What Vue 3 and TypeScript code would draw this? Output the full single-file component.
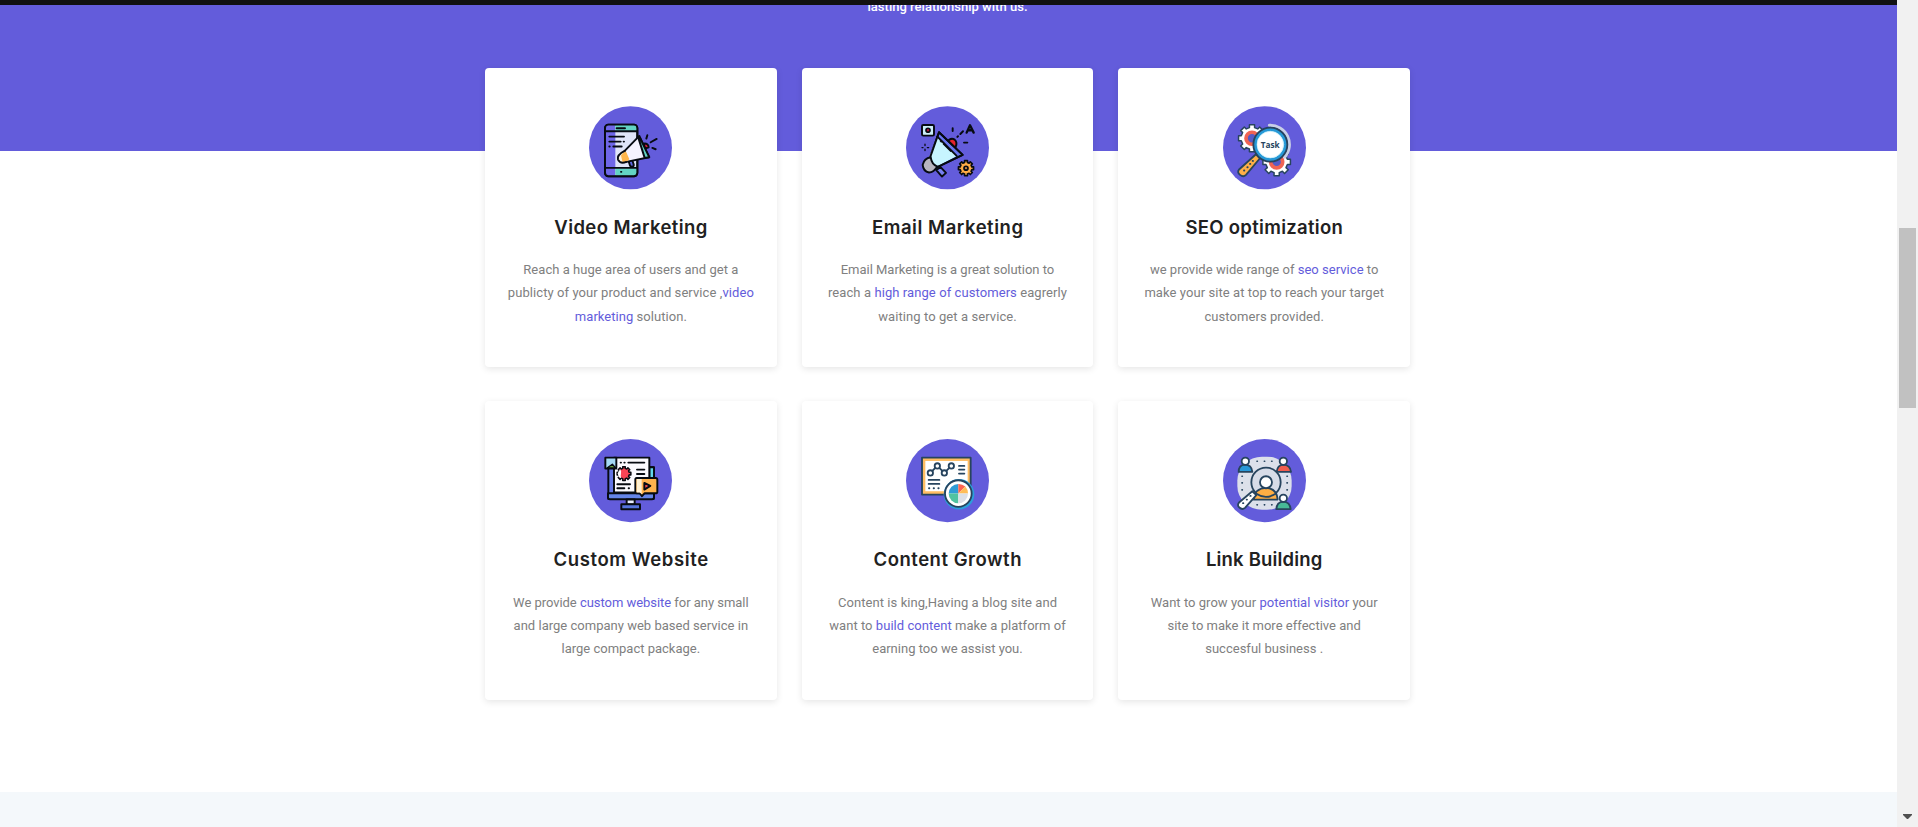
<script setup lang="ts">
import type { Directive } from 'vue'

interface Segment { text: string; link?: boolean }
interface Line { width: number; parts: Segment[] }
interface Service {
  icon: 'video' | 'email' | 'seo' | 'website' | 'content' | 'link'
  view: string
  title: string
  titleWidth: number
  lines: Line[]
}

const t = (text: string): Segment => ({ text })
const a = (text: string): Segment => ({ text, link: true })
const line = (width: number, ...parts: Segment[]): Line => ({ width, parts })

const services: Service[] = [
  {
    icon: 'video', view: '26 30 249 251', title: 'Video Marketing', titleWidth: 153,
    lines: [
      line(215, t('Reach a huge area of users and get a')),
      line(246, t('publicty of your product and service ,'), a('video')),
      line(112, a('marketing'), t(' solution.')),
    ],
  },
  {
    icon: 'email', view: '26 30 249 251', title: 'Email Marketing', titleWidth: 151,
    lines: [
      line(213.5, t('Email Marketing is a great solution to')),
      line(239, t('reach a '), a('high range of customers'), t(' eagrerly')),
      line(138.5, t('waiting to get a service.')),
    ],
  },
  {
    icon: 'seo', view: '26 30 249 251', title: 'SEO optimization', titleWidth: 157.5,
    lines: [
      line(228.5, t('we provide wide range of '), a('seo service'), t(' to')),
      line(239.5, t('make your site at top to reach your target')),
      line(119.5, t('customers provided.')),
    ],
  },
  {
    icon: 'website', view: '26 27 249 251', title: 'Custom Website', titleWidth: 154.5,
    lines: [
      line(235.5, t('We provide '), a('custom website'), t(' for any small')),
      line(234.5, t('and large company web based service in')),
      line(138.5, t('large compact package.')),
    ],
  },
  {
    icon: 'content', view: '26 27 249 251', title: 'Content Growth', titleWidth: 148,
    lines: [
      line(219, t('Content is king,Having a blog site and')),
      line(236.5, t('want to '), a('build content'), t(' make a platform of')),
      line(150.5, t('earning too we assist you.')),
    ],
  },
  {
    icon: 'link', view: '26 27 249 251', title: 'Link Building', titleWidth: 116.5,
    lines: [
      line(227, t('Want to grow your '), a('potential visitor'), t(' your')),
      line(193.5, t('site to make it more effective and')),
      line(118, t('succesful business .')),
    ],
  },
]

// Tracks a line of text so that it fills the given measure.
const vMeasure: Directive<HTMLElement, number> = {
  mounted(el, { value }) {
    const count = (el.textContent ?? '').length
    const natural = el.getBoundingClientRect().width
    const spacing = (value - natural) / (count - 1)
    el.style.letterSpacing = `${spacing.toFixed(3)}px`
    el.style.marginRight = `${(-spacing).toFixed(3)}px`
  },
}

function gear(cx: number, cy: number, outer: number, inner: number, teeth = 8): string {
  const points: string[] = []
  const step = (Math.PI * 2) / teeth
  for (let i = 0; i < teeth; i++) {
    const mid = i * step
    const corners: [number, number][] = [[-0.3, inner], [-0.24, outer], [0.24, outer], [0.3, inner]]
    for (const [offset, r] of corners) {
      const angle = mid + offset * step
      points.push(`${(cx + r * Math.cos(angle)).toFixed(1)} ${(cy + r * Math.sin(angle)).toFixed(1)}`)
    }
  }
  return `M${points.join('L')}Z`
}
</script>

<template>
  <div class="window">
    <main class="page">
      <div class="nav-edge"></div>
      <section class="intro">
        <p><span v-measure="160" class="fit">lasting relationship with us.</span></p>
      </section>
      <section class="services">
        <article v-for="(s, n) in services" :key="s.icon" class="card">
          <svg class="icon" :viewBox="s.view" preserveAspectRatio="none">
            <ellipse cx="150.5" :cy="n < 3 ? 155.5 : 152" rx="124.5" ry="125" class="disc" />

            <g v-if="s.icon === 'video'" class="ink">
              <rect x="74" y="86" width="97" height="155" rx="10" fill="#dfe4f8" />
              <path d="M84 87H105V240H84Q75 240 75 230V96Q75 87 84 87Z" fill="#6f67e8" stroke="none" />
              <path d="M105 87H161Q170 87 170 96V105H105ZM105 217H170V231Q170 240 161 240H105Z" fill="#63d4c4" stroke="none" />
              <rect x="74" y="86" width="97" height="155" rx="10" fill="none" />
              <path d="M75 106H170M75 216H170M109 97H134M87 122H131M87 137H121M130 137H131M87 152H88M99 152H124M122 228H123" fill="none" />
              <path d="M145 196L149 209Q152 215 158 212Q162 209 159 203L155 190" fill="#5f69e3" />
              <path d="M190 143Q204 141 205 154L194 158Z" fill="#d81d3b" />
              <path d="M133 165L177 120L206 184L138 198Z" fill="#f5f3ff" />
              <path d="M133 165Q109 177 113 191Q120 205 138 198L147 190L138 169Z" fill="#ffb64c" stroke="none" />
              <path d="M133 165L116 175Q110 186 116 196L127 200L122 179Z" fill="#fff4dd" stroke="none" />
              <path d="M133 165Q109 177 113 191Q120 205 138 198" fill="none" />
              <path d="M173 122L180 128L207 184L193 186Z" fill="#63d4c4" />
              <path d="M198 128L201 118M211 139L229 129M216 156L226 160" fill="none" />
            </g>

            <g v-else-if="s.icon === 'email'" class="ink">
              <rect x="74" y="87" width="36" height="32" rx="4" fill="#cceef9" />
              <circle cx="92" cy="103" r="6" fill="#ba1635" stroke-width="5" />
              <path d="M149 139Q159 124 172 131Q181 139 175 153" fill="#e5232d" />
              <path d="M117 223L129 213L146 231L134 242Z" fill="#777ff0" />
              <path d="M125 109L196 177L121 213L98 185Z" fill="#6875f0" />
              <path d="M120 122L178 180L126 208Q112 214 99 202L94 186Z" fill="#c7f5ff" stroke="none" />
              <path d="M120 122L178 180" fill="none" />
              <path d="M100 184Q80 187 76 207Q78 227 95 230Q109 230 120 212Q103 206 100 184Z" fill="#b7b5bf" />
              <path d="M125 109L196 177L121 213M125 109L98 185M130 135L132 137M139 144L160 165M166 97V105M180 123L182 121M189 114L197 106M200 140H210" fill="none" />
              <path d="M208 110L218 88L229 110M212 103H225" fill="none" stroke-width="7" />
              <path d="M83 145V149M83 160V164M74 155H77M90 155H94" stroke-width="4" />
              <path :d="gear(206, 217, 23, 18)" fill="#ffac46" stroke-width="5" />
              <circle cx="206" cy="217" r="6" fill="#c88440" stroke-width="5" />
            </g>

            <g v-else-if="s.icon === 'seo'" class="navy">
              <path :d="gear(113, 127, 41, 33)" fill="#fff" stroke-width="4.5" />
              <circle cx="113" cy="127" r="18" fill="#555bc7" stroke="#f06454" stroke-width="11" />
              <path :d="gear(187, 198, 42, 33)" fill="#fff" stroke-width="4.5" />
              <circle cx="187" cy="198" r="18" fill="#555bc7" stroke="#f06454" stroke-width="11" />
              <path d="M165 88A58 58 0 0 1 211 184" fill="none" stroke="#c8cfe7" stroke-width="9" />
              <path d="M125 175L137 187L95 237Q87 245 77 237Q67 229 75 220Z" fill="#ffb047" />
              <path d="M89 224H90M99 214H100M107 204H108M115 195H116" fill="none" />
              <circle cx="168" cy="146" r="45" fill="#fff" stroke="#2699d7" stroke-width="11" />
              <circle cx="168" cy="146" r="51" fill="none" />
              <circle cx="168" cy="146" r="40" fill="#fff" stroke="#bdeaf7" stroke-width="2" />
              <text x="139" y="156" textLength="57" lengthAdjust="spacingAndGlyphs" class="task">Task</text>
            </g>

            <g v-else-if="s.icon === 'website'" class="ink">
              <path d="M89 112H220V207H84V118Q84 112 89 112Z" fill="#6375e4" />
              <path d="M207 112H221V190H207Z" fill="#62d7ec" />
              <path d="M83 190H221V202Q221 208 215 208H89Q83 208 83 202Z" fill="#6485e8" />
              <path d="M139 209H163V224H139Z" fill="#e9eeff" />
              <rect x="123" y="223" width="56" height="15" fill="#5574dc" />
              <path d="M101 83H207V188H101Z" fill="#fbfaff" />
              <path d="M75 83H108V116H75Z" fill="#a5d9f5" />
              <path d="M80 114L96 103L106 114Z" fill="#6ba336" stroke-width="4" />
              <path d="M121 98H122M132 98H133M144 98H192M170 119H192M170 132H192M111 163H149M111 175H132M145 175H146" fill="none" />
              <path :d="gear(131, 131, 21, 16)" fill="#f94455" stroke-width="4.5" />
              <path d="M119 118Q124 122 122 130Q120 139 123 145L115 141L112 130Z" fill="#fff" stroke="none" />
              <path d="M169 144H226Q231 144 231 149V186Q231 190 225 190H193L185 199L178 190H169Q165 190 165 184V149Q165 144 169 144Z" fill="#ffb34e" />
              <path d="M169 147H184V193L179 188H169Z" fill="#fff0d2" stroke="none" />
              <path d="M192 159L210 168L192 179Z" fill="#fa4b4c" />
            </g>

            <g v-else-if="s.icon === 'content'" class="navy">
              <rect x="74" y="83" width="146" height="111" fill="#ffbd63" />
              <rect x="84" y="93" width="127" height="91" fill="#fff" stroke="none" />
              <circle cx="185" cy="193" r="46" fill="#2b9fdb" stroke="none" />
              <path d="M99 129L120 108L141 129L162 108" fill="none" />
              <circle cx="99" cy="129" r="8" fill="#fff" />
              <circle cx="120" cy="108" r="8" fill="#fff" />
              <circle cx="141" cy="129" r="8" fill="#fff" />
              <circle cx="162" cy="108" r="8" fill="#fff" />
              <path d="M185 108H201M185 119H201M185 131H201M94 150H126M94 162H126M95 175H96M109 175H110M123 175H124" fill="none" />
              <circle cx="183" cy="191" r="40" fill="#fff" />
              <path d="M183 191V162A29 29 0 0 0 154 191Z" fill="#309bd5" stroke="none" />
              <path d="M183 191L204 170A29 29 0 0 0 183 162Z" fill="#ff6450" stroke="none" />
              <path d="M183 191H212A29 29 0 0 0 204 170Z" fill="#ffbd58" stroke="none" />
              <path d="M183 191H154A29 29 0 0 0 183 220Z" fill="#51c3a1" stroke="none" />
              <path d="M183 191H212A29 29 0 0 1 183 220Z" fill="#dce0e8" stroke="none" />
            </g>

            <g v-else class="navy">
              <rect x="69" y="80" width="163" height="160" rx="74" ry="72" fill="#dce0ea" stroke="none" />
              <path d="M128 94H129M150 94H151M172 94H173M83 139H84M83 159H84M83 180H84M218 139H219M218 159H219M218 180H219M128 225H129M150 225H151M172 225H173" stroke-width="5" fill="none" />
              <circle cx="155" cy="157" r="44" fill="#d7dce8" />
              <path d="M118 209Q121 175 155 174Q187 175 190 209Z" fill="#ffae43" />
              <circle cx="155" cy="157" r="18" fill="#fff" />
              <path d="M125 191Q154 211 185 191" fill="none" />
              <path d="M114 184L126 196L92 234Q84 241 75 233Q67 226 75 217Z" fill="#fff" />
              <path d="M86 220H87M97 209H98M108 198H109" fill="none" />
              <path d="M73 126Q73 105 91 104Q112 104 114 126Z" fill="#2998d7" />
              <circle cx="93" cy="94" r="11" fill="#fff" />
              <path d="M187 126Q189 105 207 104Q228 105 230 126Z" fill="#f15d4e" />
              <circle cx="207" cy="94" r="11" fill="#fff" />
              <path d="M186 238Q187 216 207 215Q227 216 229 238Z" fill="#47b997" />
              <circle cx="207" cy="205" r="11" fill="#fff" />
            </g>
          </svg>
          <h3><span v-measure="s.titleWidth" class="fit">{{ s.title }}</span></h3>
          <div class="copy">
            <p v-for="(l, i) in s.lines" :key="i"><span v-measure="l.width" class="fit"><template v-for="(p, j) in l.parts" :key="j"><a v-if="p.link">{{ p.text }}</a><template v-else>{{ p.text }}</template></template></span></p>
          </div>
        </article>
      </section>
      <div class="next-section"></div>
    </main>
    <aside class="scrollbar">
      <div class="thumb"></div>
      <svg class="arrow" width="9" height="5" viewBox="0 0 9 5"><path d="M0 0H9V1L5 5H4L0 1Z" fill="#505050" /></svg>
    </aside>
  </div>
</template>

<style>
body { overflow: hidden; }
</style>

<style scoped>
.window {
  display: flex;
  height: 827px;
  overflow: hidden;
  background: #fff;
}
.page {
  display: flex;
  flex-direction: column;
  width: 1897px;
  height: 827px;
}
.nav-edge {
  flex: none;
  height: 5px;
  background: #111;
  z-index: 1;
}
.intro {
  flex: none;
  height: 146px;
  overflow: hidden;
  background: #635cdb;
  color: #fff;
  text-align: center;
}
.intro p {
  margin: -10px 2px 0 0;
  font: 500 13px/23px Roboto, sans-serif;
}
.fit {
  display: inline-block;
  white-space: pre;
}
.services {
  display: grid;
  flex: none;
  grid-template-columns: repeat(3, 1fr);
  grid-auto-rows: 299px;
  gap: 34px 25px;
  width: 925px;
  height: 724px;
  margin: -83px 0 0 485px;
}
.card {
  display: flex;
  flex-direction: column;
  align-items: center;
  box-sizing: border-box;
  padding-top: 38px;
  border-radius: 4px;
  background: #fff;
  box-shadow: 0 2px 7px rgba(0, 0, 0, 0.1);
}
.icon {
  flex: none;
  width: 83px;
  height: 83.5px;
}
.disc { fill: #635cdb; }
.ink {
  stroke: #070b12;
  stroke-width: 5.8;
  stroke-linecap: round;
  stroke-linejoin: round;
}
.navy {
  stroke: #27445e;
  stroke-width: 5.5;
  stroke-linecap: round;
  stroke-linejoin: round;
}
.task {
  fill: #27445e;
  stroke: none;
  font: 700 27px "Open Sans", sans-serif;
}
h3 {
  margin: 23.5px 0 1px;
  color: #212121;
  font: 600 18.5px/28px Inter, sans-serif;
}
.card:nth-child(n + 4) h3 {
  margin: 22.5px 0 2px;
}
.copy {
  margin-top: 16px;
  color: #808080;
  font: 400 13px/23.4px Roboto, sans-serif;
  text-align: center;
}
.card:nth-child(n + 4) .copy {
  line-height: 23px;
}
.copy p { margin: 0; }
.copy a { color: #635cdb; }
.next-section {
  flex: none;
  height: 35px;
  background: #f4f8fb;
}
.scrollbar {
  display: flex;
  flex-direction: column;
  align-items: center;
  justify-content: space-between;
  box-sizing: border-box;
  width: 21px;
  height: 827px;
  padding: 228px 0 8px;
  background: #f1f1f1;
}
.thumb {
  width: 17px;
  height: 180px;
  background: #c1c1c1;
}
</style>
